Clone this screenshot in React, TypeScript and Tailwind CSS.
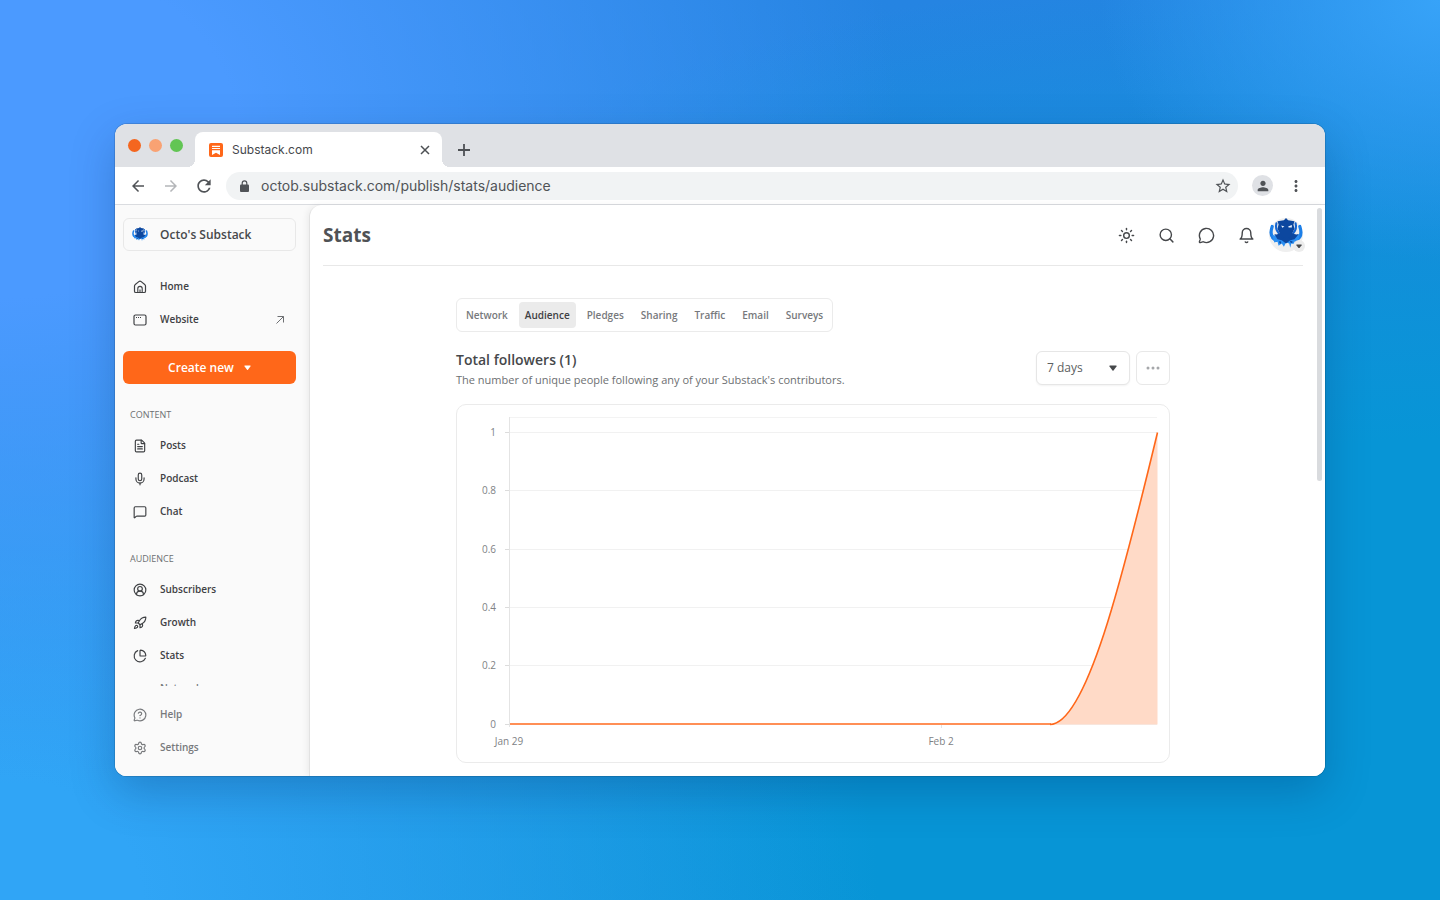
import type { ReactNode } from "react";
import {
  CircleUserRound,
  FileText,
  MessageCircle,
  MessageCircleQuestionMark,
  MessageSquare,
  Mic,
  PieChart,
  Rocket,
  Search,
  Settings,
  Sun,
  type LucideIcon,
} from "lucide-react";
import { FiBell } from "react-icons/fi";
import { MdArrowBack, MdArrowForward, MdMoreVert, MdPerson, MdRefresh, MdStarOutline } from "react-icons/md";

const CONTENT_LINKS = [
  { label: "Posts", icon: FileText },
  { label: "Podcast", icon: Mic },
  { label: "Chat", icon: MessageSquare },
];

const AUDIENCE_LINKS = [
  { label: "Subscribers", icon: CircleUserRound },
  { label: "Growth", icon: Rocket },
  { label: "Stats", icon: PieChart },
];

const TABS = ["Network", "Audience", "Pledges", "Sharing", "Traffic", "Email", "Surveys"];

const HEADER_ACTIONS = [
  { label: "Theme", icon: Sun },
  { label: "Search", icon: Search },
  { label: "Messages", icon: MessageCircle },
  { label: "Notifications", icon: FiBell },
];

const Y_TICKS = [
  { label: "1", y: 28 },
  { label: "0.8", y: 86 },
  { label: "0.6", y: 145 },
  { label: "0.4", y: 203 },
  { label: "0.2", y: 261 },
  { label: "0", y: 320 },
];

const CURVE = "M593 319.5C629 319.5 665 175 700.5 27.5";

function Octopus({ className }: { className?: string }) {
  return (
    <svg viewBox="0 0 32 32" className={className} aria-hidden="true">
      <g fill="none" strokeLinecap="round" stroke="#1c7fe8">
        <path d="M3 8c-2 6-1 11 4 13" strokeWidth="3" />
        <path d="M29 8c2 6 1 11-4 13" strokeWidth="3" />
        <path d="M7 5c-1 4 0 7 2 9M25 5c1 4 0 7-2 9" stroke="#1565d0" strokeWidth="2" />
      </g>
      <path
        d="M3 16l2 7 3-1 1 4 3-2 2 3 2-4 3 1 1 4 1-4 4 1-1-3 4-2 1-5-6 2H9z"
        fill="#2b8ff2"
      />
      <path
        d="M16 0l-2 2-6 1 1 3-1 4 2 4c-1 1-3 2-5 1l3 5 4 1 4 3 4-3 4-1 4-5c-2 1-5 0-6-1l2-4-1-4 1-3-6-1z"
        fill="#0c479f"
      />
      <path d="M12 18l2 1M19 18l2 2M10 22l1 2M20 22l2 1" stroke="#0c479f" strokeWidth="1.500" />
      <path d="M11.500 7l3 1-2 1.200zM18 8l3.500-1.500v2.500h-3z" fill="#e9f3ff" />
    </svg>
  );
}

function Caret({ className }: { className?: string }) {
  return (
    <svg viewBox="0 0 8 6" className={className} aria-hidden="true">
      <path d="M1 .5h6q1 .2.5 1L4.500 5.500q-.5.500-1 0L.5 1.500Q0 .7 1 .5z" fill="currentColor" />
    </svg>
  );
}

type NavRowProps = {
  label: string;
  icon: ReactNode;
  muted?: boolean;
  trailing?: ReactNode;
};

function NavRow({ label, icon, muted, trailing }: NavRowProps) {
  return (
    <a
      href="#"
      className={`flex h-[33px] items-center pr-3 pl-[10px] text-[10px] font-semibold ${muted ? "text-[#77797c]" : "text-[#3f4144]"}`}
    >
      <span className="w-[27px]">{icon}</span>
      {label}
      {trailing ? <span className="ml-auto">{trailing}</span> : null}
    </a>
  );
}

function NavIcon({ icon: Icon }: { icon: LucideIcon }) {
  return <Icon size={14} strokeWidth={2} />;
}

function SectionLabel({ children }: { children: ReactNode }) {
  return <h2 className="mt-[19px] h-[26px] pl-[7px] text-[9px] leading-6 font-medium text-[#6d6f72]">{children}</h2>;
}

function BrowserChrome() {
  return (
    <div>
      <div className="flex h-[43px] items-end bg-[#dfe1e5] pl-[13px]">
        <div className="flex w-[67px] gap-2 self-center">
          <span className="size-[13px] rounded-full bg-[#f4661f]" />
          <span className="size-[13px] rounded-full bg-[#f9a273]" />
          <span className="size-[13px] rounded-full bg-[#62c554]" />
        </div>
        <div className="relative flex h-[35px] w-[247px] items-center rounded-t-lg bg-white pr-3 pl-[14px]">
          <span className="absolute bottom-0 -left-2 size-2 bg-[radial-gradient(circle_at_0_0,transparent_8px,#fff_8px)]" />
          <span className="absolute -right-2 bottom-0 size-2 bg-[radial-gradient(circle_at_100%_0,transparent_8px,#fff_8px)]" />
          <svg viewBox="0 0 14 14" className="mr-[9px] size-[14px]" aria-hidden="true">
            <rect width="14" height="14" rx="2" fill="#ff6719" />
            <path d="M3 2.800h8v1.100H3zM3 5h8v1.100H3zM3 7.200h8v4.800L7 9.800 3 12z" fill="#fff" />
          </svg>
          <span className="font-['Inter',sans-serif] text-[12px] text-[#46484c]">Substack.com</span>
          <button type="button" aria-label="Close tab" className="ml-auto text-[#4d5054]">
            <svg viewBox="0 0 10 10" className="size-[10px]" stroke="currentColor" strokeWidth="1.500">
              <path d="M1 1l8 8M9 1l-8 8" />
            </svg>
          </button>
        </div>
        <button type="button" aria-label="New tab" className="ml-4 flex h-[35px] items-center text-[#4d5054]">
          <svg viewBox="0 0 12 12" className="size-3" stroke="currentColor" strokeWidth="1.800">
            <path d="M6 0v12M0 6h12" />
          </svg>
        </button>
      </div>

      <div className="flex h-[38px] items-center border-b border-[#dadce0] bg-white pr-5 pl-[14px] text-[#505357]">
        <button type="button" aria-label="Back">
          <MdArrowBack size={18} />
        </button>
        <button type="button" aria-label="Forward" className="ml-[15px] text-[#b4b6b9]">
          <MdArrowForward size={18} />
        </button>
        <button type="button" aria-label="Reload" className="ml-[14px]">
          <MdRefresh size={20} />
        </button>
        <div className="ml-3 flex h-7 flex-1 items-center rounded-full bg-[#f1f3f4] pr-[6px] pl-[14px]">
          <svg viewBox="0 0 9 12" className="h-3 w-[9px]" aria-hidden="true">
            <rect y="4.500" width="9" height="7.500" rx="1" fill="currentColor" />
            <path d="M2.200 5V3.200a2.300 2.300 0 0 1 4.600 0V5" fill="none" stroke="currentColor" strokeWidth="1.200" />
          </svg>
          <input
            type="text"
            aria-label="Address"
            readOnly
            defaultValue="octob.substack.com/publish/stats/audience"
            className="ml-3 flex-1 bg-transparent font-['Inter',sans-serif] text-[14px] outline-none"
          />
          <button type="button" aria-label="Bookmark">
            <MdStarOutline size={18} />
          </button>
        </div>
        <button
          type="button"
          aria-label="Profile"
          className="ml-[14px] flex size-[21px] items-center justify-center rounded-full bg-[#dfe1e5]"
        >
          <MdPerson size={16} />
        </button>
        <button type="button" aria-label="Menu" className="ml-[14px]">
          <MdMoreVert size={18} />
        </button>
      </div>
    </div>
  );
}

function Sidebar() {
  return (
    <aside className="flex w-[194px] flex-col bg-[#fafafa] pt-[13px] pr-[13px] pb-3 pl-2">
      <button
        type="button"
        className="flex h-[33px] items-center rounded-md border border-[#e8e8e8] pl-2 text-[12px] font-semibold text-[#46484b]"
      >
        <Octopus className="mr-3 size-4" />
        Octo's Substack
      </button>

      <nav aria-label="Main">
        <div className="mt-[19px]">
          <NavRow
            label="Home"
            icon={
              <svg viewBox="0 0 14 14" className="size-[14px]" fill="none" stroke="currentColor" aria-hidden="true">
                <path
                  d="M1.500 6q0-1 .8-1.600l3.800-3q.9-.6 1.800 0l3.800 3q.8.600.8 1.600v5.200q0 1.300-1.300 1.300H2.800q-1.300 0-1.300-1.300z"
                  strokeWidth="1.200"
                />
                <path d="M4.800 12.500V8.600a2.200 2.200 0 0 1 4.400 0v3.900M7 9.500v3" strokeWidth="1.100" />
              </svg>
            }
          />
          <NavRow
            label="Website"
            icon={
              <svg viewBox="0 0 14 14" className="size-[14px]" fill="none" stroke="currentColor" aria-hidden="true">
                <rect x="1" y="2" width="12" height="10" rx="1.500" strokeWidth="1.200" />
                <path d="M3 4.500h1M5 4.500h1M7 4.500h1" />
              </svg>
            }
            trailing={
              <svg viewBox="0 0 8 8" className="size-2 text-[#6d6f72]" fill="none" stroke="currentColor" aria-hidden="true">
                <path d="M.5 7.500l7-7M1.500.5h6v6" />
              </svg>
            }
          />
        </div>

        <button
          type="button"
          className="mt-[15px] flex h-[33px] w-full items-center justify-center gap-[10px] rounded-md bg-[#ff6719] text-[12px] font-semibold text-white"
        >
          Create new
          <Caret className="w-[7px]" />
        </button>

        <SectionLabel>CONTENT</SectionLabel>
        {CONTENT_LINKS.map((link) => (
          <NavRow key={link.label} label={link.label} icon={<NavIcon icon={link.icon} />} />
        ))}

        <SectionLabel>AUDIENCE</SectionLabel>
        {AUDIENCE_LINKS.map((link) => (
          <NavRow key={link.label} label={link.label} icon={<NavIcon icon={link.icon} />} />
        ))}
        <div className="h-[14px] overflow-hidden">
          <NavRow muted label="Network" icon={null} />
        </div>
      </nav>

      <div className="mt-auto">
        <NavRow muted label="Help" icon={<NavIcon icon={MessageCircleQuestionMark} />} />
        <NavRow muted label="Settings" icon={<NavIcon icon={Settings} />} />
      </div>
    </aside>
  );
}

function FollowersChart() {
  return (
    <svg viewBox="0 0 712 357" className="block w-full" role="img" aria-label="Total followers over time">
      <path d="M52 12.500h648" stroke="#f3f3f3" />
      {Y_TICKS.map((tick) => (
        <g key={tick.label}>
          <path d={`M52 ${tick.y - 0.5}h648`} stroke="#f1f1f1" />
          <path d={`M48 ${tick.y - 0.5}h4`} stroke="#dcdcdc" />
          <text x="39" y={tick.y + 3} textAnchor="end" className="fill-[#808285] text-[10px]">
            {tick.label}
          </text>
        </g>
      ))}
      <path d="M52.500 12v310M484.500 320v3" stroke="#e4e4e4" />
      <path d={`${CURVE}V319.500z`} fill="#ffdac7" />
      <path d="M53 319h541" stroke="#ff8f56" strokeWidth="2" />
      <path d={CURVE} fill="none" stroke="#ff6719" strokeWidth="1.600" />
      <text x="52" y="340" textAnchor="middle" className="fill-[#808285] text-[10px]">
        Jan 29
      </text>
      <text x="484" y="340" textAnchor="middle" className="fill-[#808285] text-[10px]">
        Feb 2
      </text>
    </svg>
  );
}

function StatsPage() {
  return (
    <main className="flex flex-1 rounded-tl-xl border-l border-[#e2e2e2] bg-white shadow-[-2px_0_6px_rgba(0,0,0,0.06)]">
      <div className="flex-1 pr-[14px] pb-[13px] pl-[13px]">
        <header className="flex h-[61px] items-center border-b border-[#e8e8e8]">
          <h1 className="text-[19px] font-bold text-[#505255]">Stats</h1>
          <div className="ml-auto flex items-center gap-[23px] text-[#46484b]">
            {HEADER_ACTIONS.map(({ label, icon: Icon }) => (
              <button key={label} type="button" aria-label={label}>
                <Icon size={17} strokeWidth={2} />
              </button>
            ))}
            <button type="button" aria-label="Account" className="relative -ml-[9px] size-[34px] rounded-full bg-[#efefef]">
              <Octopus className="size-[34px]" />
              <span className="absolute -right-[2px] bottom-0 flex size-3 items-center justify-center rounded-full bg-[#ececec]">
                <Caret className="w-[6px]" />
              </span>
            </button>
          </div>
        </header>

        <div className="mx-auto max-w-[714px]">
          <div
            role="tablist"
            className="mt-8 flex h-[34px] w-fit items-center gap-[5px] rounded-md border border-[#ebebeb] px-[3px] text-[10px] font-semibold"
          >
            {TABS.map((tab) => (
              <button
                key={tab}
                type="button"
                role="tab"
                aria-selected={tab === "Audience"}
                className={`h-[26px] rounded-sm px-[6px] ${tab === "Audience" ? "bg-[#ebebeb] text-[#3f4144]" : "text-[#77797c]"}`}
              >
                {tab}
              </button>
            ))}
          </div>

          <div className="mt-[19px] flex items-start justify-between">
            <div>
              <h2 className="text-[14px] leading-[18px] font-semibold text-[#46484b]">Total followers (1)</h2>
              <p className="text-[11px] leading-[22px] text-[#6d6f72]">
                The number of unique people following any of your Substack's contributors.
              </p>
            </div>
            <div className="flex gap-[6px]">
              <div className="relative">
                <select
                  aria-label="Date range"
                  className="h-[34px] w-[94px] appearance-none rounded-md border border-[#e6e6e6] bg-white pl-[10px] text-[12px] text-[#5d5f62] shadow-xs"
                >
                  <option>7 days</option>
                </select>
                <Caret className="pointer-events-none absolute top-[14px] right-[13px] w-2 text-[#46484b]" />
              </div>
              <button
                type="button"
                aria-label="More options"
                className="flex size-[34px] items-center justify-center rounded-md border border-[#e8e8e8] text-[#a5a7aa]"
              >
                <svg viewBox="0 0 14 4" className="w-[14px]" fill="currentColor" aria-hidden="true">
                  <circle cx="2" cy="2" r="1.500" />
                  <circle cx="7" cy="2" r="1.500" />
                  <circle cx="12" cy="2" r="1.500" />
                </svg>
              </button>
            </div>
          </div>

          <div className="mt-[13px] rounded-[10px] border border-[#ebebeb]">
            <FollowersChart />
          </div>
        </div>
      </div>
      <div className="w-2 pt-[3px]">
        <div className="h-[273px] w-[5px] rounded-full bg-[#d9dbde]" />
      </div>
    </main>
  );
}

export default function App() {
  return (
    <div className="flex min-h-screen items-center bg-[#1f8fe0] bg-[radial-gradient(340px_260px_at_100%_0%,#37a3f8_0%,transparent_100%),radial-gradient(900px_660px_at_0%_14%,#4b9aff_0%,#4b9aff_26%,transparent_100%),radial-gradient(880px_760px_at_0%_100%,#30a5f6_0%,#30a5f6_16%,transparent_100%),radial-gradient(ellipse_at_100%_85%,#0795d6_0%,#0795d6_30%,transparent_75%),linear-gradient(#2584e2,#1c8fdb)] px-[115px] py-8 font-['Open_Sans',sans-serif]">
      <div className="w-full overflow-hidden rounded-xl bg-white shadow-[0_0_0_1px_rgba(0,0,0,0.12),0_16px_44px_rgba(0,40,90,0.25)]">
        <BrowserChrome />
        <div className="flex bg-[#fafafa]">
          <Sidebar />
          <StatsPage />
        </div>
      </div>
    </div>
  );
}
